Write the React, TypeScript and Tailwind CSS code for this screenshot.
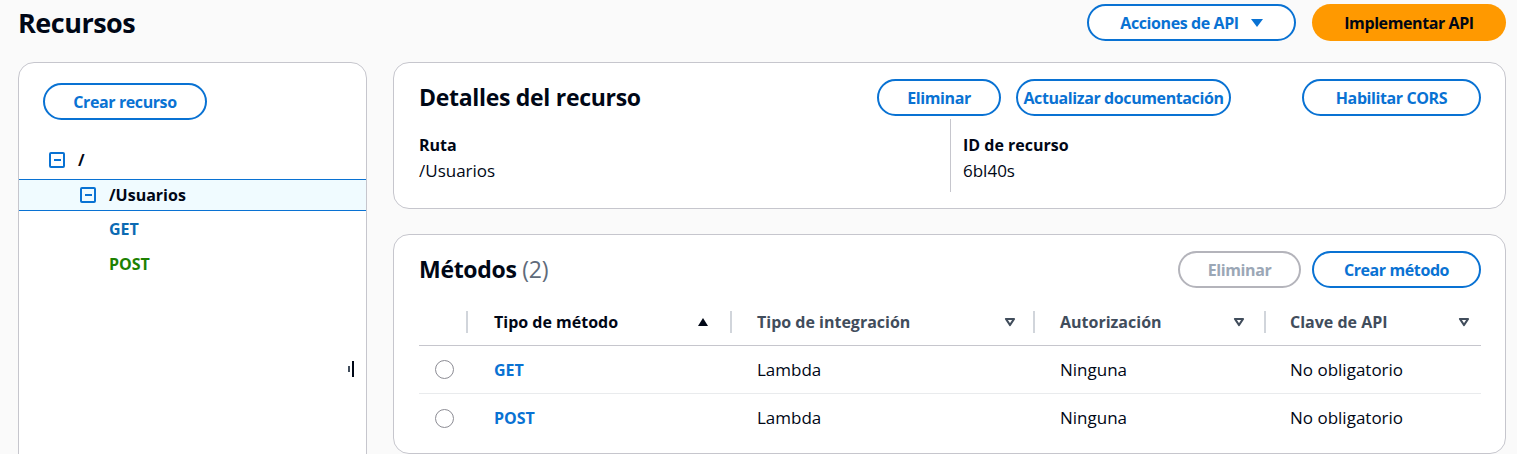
import React from "react";

const F = { fontFamily: '"Open Sans", "Noto Sans", Arial, sans-serif' };

function Btn({ children, disabled, w }: { children: React.ReactNode; disabled?: boolean; w: string }) {
  return (
    <button
      className={
        (disabled
          ? "border-[#b4b4bb] text-[#9ba7b6] "
          : "border-[#0972d3] text-[#0972d3] ") +
        "h-[37px] rounded-full border-2 text-[16px] font-bold bg-white whitespace-nowrap flex items-center justify-center tracking-[-0.4px] " +
        w
      }
    >
      {children}
    </button>
  );
}

function MinusBox() {
  return (
    <span className="inline-flex items-center justify-center w-[16px] h-[16px] border-2 border-[#0972d3] rounded-[2px]">
      <span className="block w-[7px] h-[2px] bg-[#0972d3]" />
    </span>
  );
}

function SortDown() {
  return (
    <svg width="12" height="10" viewBox="0 0 12 10">
      <path d="M2 2 L10 2 L6 8 Z" fill="none" stroke="#414d5c" strokeWidth="2.2" strokeLinejoin="round" />
    </svg>
  );
}

function SortUp() {
  return (
    <svg width="12" height="10" viewBox="0 0 12 10">
      <path d="M1 9 L11 9 L6 1 Z" fill="#000716" />
    </svg>
  );
}

export default function App() {
  return (
    <div style={F} className="w-[1517px] h-[454px] overflow-hidden bg-[#fafafa] text-[#000716]">
      <div className="flex items-center justify-between pl-[18px] pr-[11px] pt-[4px] h-[41px]">
        <h1 className="text-[27px] font-bold tracking-[-0.5px] leading-[32px]">Recursos</h1>
        <div className="flex gap-[16px]">
          <button className="h-[37px] w-[209px] rounded-full border-2 border-[#0972d3] text-[#0972d3] text-[16px] font-bold bg-white flex items-center justify-center gap-[12px] tracking-[-0.4px]">
            Acciones de API
            <svg width="12" height="10" viewBox="0 0 12 10"><path d="M0 1 L12 1 L6 9 Z" fill="#0972d3" /></svg>
          </button>
          <button className="h-[37px] w-[194px] rounded-full bg-[#ff9900] text-[#000716] text-[16px] font-bold tracking-[-0.4px]">
            Implementar API
          </button>
        </div>
      </div>
      <div className="flex pl-[18px] pr-[11px] pt-[21px] gap-[26px]">
        <div className="w-[349px] h-[420px] shrink-0 bg-white border border-[#c6c6cd] rounded-[16px] relative">
          <div className="pl-[24px] pt-[20px]">
            <Btn w="w-[164px]">Crear recurso</Btn>
          </div>
          <div className="mt-[28px] text-[16px]">
            <div className="h-[24px] flex items-center gap-[13px] pl-[30px] font-bold">
              <MinusBox />
              <span>/</span>
            </div>
            <div className="mt-[7px] h-[32px] flex items-center gap-[13px] pl-[61px] font-bold bg-[#f0fbff] border-y border-[#0972d3]">
              <MinusBox />
              <span>/Usuarios</span>
            </div>
            <div className="h-[35px] flex items-center pl-[90px] font-bold text-[#0b6ab3]">GET</div>
            <div className="h-[36px] flex items-center pl-[90px] font-bold text-[#1d8102]">POST</div>
          </div>
          <div className="absolute left-[329px] top-[298px] flex items-center gap-[2px]">
            <span className="block w-[2px] h-[6px] bg-[#414d5c]" />
            <span className="block w-[2px] h-[16px] bg-[#000716]" />
          </div>
        </div>
        <div className="flex-1 flex flex-col gap-[25px]">
          <div className="h-[147px] bg-white border border-[#c6c6cd] rounded-[16px] pl-[25px] pr-[24px] pt-[16px]">
            <div className="flex items-center justify-between">
              <h2 className="text-[23px] font-bold tracking-[-0.3px]">Detalles del recurso</h2>
              <div className="flex">
                <Btn w="w-[124px]">Eliminar</Btn>
                <div className="ml-[15px]"><Btn w="w-[215px]">Actualizar documentación</Btn></div>
                <div className="ml-[71px]"><Btn w="w-[179px]">Habilitar CORS</Btn></div>
              </div>
            </div>
            <div className="flex text-[17px] leading-[25px] mt-[3px]">
              <div className="w-[531px] pt-[14px]">
                <div className="font-bold text-[16px]">Ruta</div>
                <div>/Usuarios</div>
              </div>
              <div className="border-l border-[#c6c6cd] pl-[12px] pt-[14px] h-[73px]">
                <div className="font-bold text-[16px]">ID de recurso</div>
                <div>6bl40s</div>
              </div>
            </div>
          </div>
          <div className="h-[220px] bg-white border border-[#c6c6cd] rounded-[16px] pl-[25px] pr-[24px] pt-[16px]">
            <div className="flex items-center justify-between">
              <h2 className="text-[23px] font-bold tracking-[-0.3px]">
                Métodos <span className="font-normal text-[#5f6b7a]">(2)</span>
              </h2>
              <div className="flex gap-[11px]">
                <Btn disabled w="w-[123px]">Eliminar</Btn>
                <Btn w="w-[169px]">Crear método</Btn>
              </div>
            </div>
            <div className="mt-[14px] text-[17px]">
              <div className="h-[44px] pb-[3px] flex items-center border-b border-[#c6c6cd] font-bold text-[16px] text-[#414d5c]">
                <div className="w-[49px] h-[22px] border-r-2 border-[#d1d5db] shrink-0" />
                <div className="w-[264px] h-[22px] flex items-center justify-between pl-[26px] pr-[21px] border-r-2 border-[#d1d5db] text-[#000716]">
                  <span>Tipo de método</span><SortUp />
                </div>
                <div className="w-[303px] h-[22px] flex items-center justify-between pl-[25px] pr-[17px] border-r-2 border-[#d1d5db]">
                  <span>Tipo de integración</span><SortDown />
                </div>
                <div className="w-[231px] h-[22px] flex items-center justify-between pl-[25px] pr-[19px] border-r-2 border-[#d1d5db]">
                  <span>Autorización</span><SortDown />
                </div>
                <div className="flex-1 h-[22px] flex items-center justify-between pl-[24px] pr-[11px]">
                  <span>Clave de API</span><SortDown />
                </div>
              </div>
              {[
                ["GET", "Lambda", "Ninguna", "No obligatorio"],
                ["POST", "Lambda", "Ninguna", "No obligatorio"],
              ].map((r, i) => (
                <div key={i} className={"h-[48px] flex items-center " + (i === 0 ? "border-b border-[#e9ebed]" : "")}>
                  <div className="w-[49px] shrink-0 pl-[16px]">
                    <span className="block w-[19px] h-[19px] rounded-full border border-[#8c8c94]" />
                  </div>
                  <div className="w-[264px] pl-[26px] font-bold text-[16px] text-[#0972d3]">{r[0]}</div>
                  <div className="w-[303px] pl-[25px]">{r[1]}</div>
                  <div className="w-[231px] pl-[25px]">{r[2]}</div>
                  <div className="flex-1 pl-[24px]">{r[3]}</div>
                </div>
              ))}
            </div>
          </div>
        </div>
      </div>
    </div>
  );
}
